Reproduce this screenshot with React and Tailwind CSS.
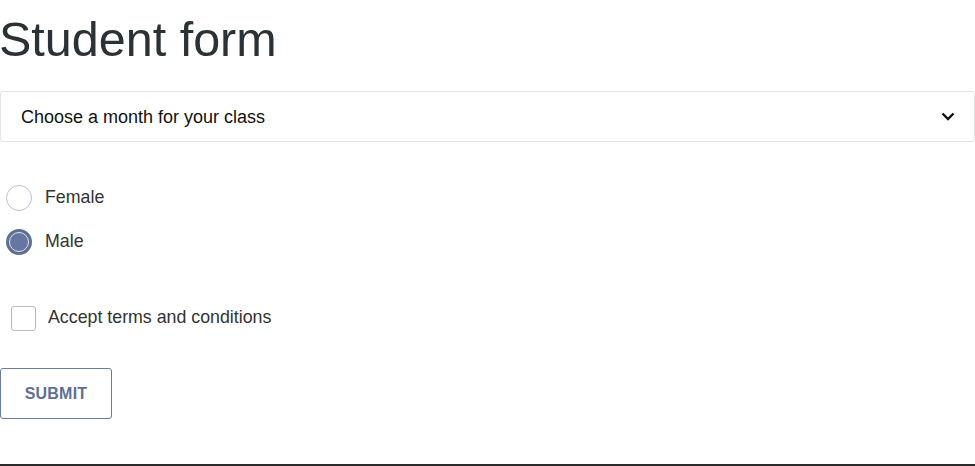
import { useState } from "react";

const App = () => {
  const [gender, setGender] = useState("male");
  const [accepted, setAccepted] = useState(false);

  return (
    <div
      className="w-[975px] h-[466px] bg-white flex flex-col overflow-hidden"
      style={{ fontFamily: '"Liberation Sans", Arial, sans-serif' }}
    >
      <div className="flex-1 flex flex-col">
        {/* Title */}
        <h1 className="text-[48.5px] leading-[56px] text-[#2b3236] mt-[11px] -ml-[1px]">
          Student form
        </h1>

        {/* Month select */}
        <div className="mt-[24px] h-[51px] border border-[#e3e3e3] rounded-[3px] flex items-center justify-between pl-[20px] pr-[19px]">
          <span className="text-[18px] text-[#111] mt-[2px]">Choose a month for your class</span>
          <svg width="14" height="9" viewBox="0 0 14 9">
            <path d="M1.5 1.5 L7 7 L12.5 1.5" fill="none" stroke="#111" strokeWidth="2.4" />
          </svg>
        </div>

        {/* Gender radios */}
        <div className="mt-[43px] flex flex-col gap-[18px] pl-[6px]">
          <label className="flex items-center gap-[13px] cursor-pointer" onClick={() => setGender("female")}>
            <span className="w-[26px] h-[26px] rounded-full border border-[#b9c1cb] bg-white" />
            <span className="text-[17.8px] text-[#333] -mt-[2px]">Female</span>
          </label>
          <label className="flex items-center gap-[13px] cursor-pointer" onClick={() => setGender("male")}>
            <span className="w-[26px] h-[26px] rounded-full bg-[#5f6f95] flex items-center justify-center">
              <span className="w-[20px] h-[20px] rounded-full border-[1.5px] border-[#dfe3ec] bg-[#6676a0]" />
            </span>
            <span className="text-[17.8px] text-[#333] -mt-[2px]">Male</span>
          </label>
        </div>

        {/* Terms */}
        <label className="mt-[51px] ml-[11px] flex items-center gap-[12px] cursor-pointer" onClick={() => setAccepted(!accepted)}>
          <span className="w-[25px] h-[25px] rounded-[3px] border border-[#b7bcc3] bg-white" />
          <span className="text-[17.8px] text-[#333] -mt-[2px]">Accept terms and conditions</span>
        </label>

        {/* Submit */}
        <button className="mt-[37px] w-[112px] h-[51px] border border-[#6c7ba0] rounded-[3px] text-[16px] font-bold text-[#5f6f95] tracking-[0.2px]">
          SUBMIT
        </button>
      </div>
      <div className="h-[2px] bg-[#2b2b2b]" />
    </div>
  );
};

export default App;
